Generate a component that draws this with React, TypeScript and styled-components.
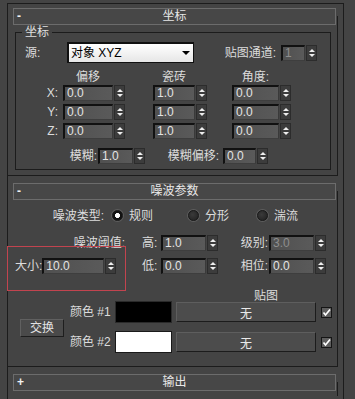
import React from 'react';
import styled, { createGlobalStyle } from 'styled-components';

const GlobalStyle = createGlobalStyle`
  html, body {
    margin: 0;
    padding: 0;
    background: #444444;
  }
  body {
    font-family: "Liberation Sans", "Noto Sans CJK SC", sans-serif;
    font-size: 12px;
    color: #dcdcdc;
  }
  * {
    box-sizing: border-box;
  }
`;

const Screen = styled.div`
  position: relative;
  width: 355px;
  height: 399px;
  overflow: hidden;
  background: #444444;
  padding-top: 3px;
`;

const Panel = styled.div`
  margin-left: 7px;
  width: 337px;
  height: 396px;
  border: 1px solid #1c1c1c;
  border-bottom: none;
  padding-top: 4px;
`;

const Rollout = styled.section<{ $mt?: number }>`
  margin-top: ${(p) => p.$mt ?? 0}px;
`;

const RolloutHeader = styled.div`
  position: relative;
  z-index: 1;
  margin: 0 7px 0 5px;
  height: 17px;
  border: 1px solid #6c6c6c;
  background: #474747;
  display: grid;
  grid-template-columns: 16px 1fr 16px;
  align-items: center;
  line-height: 15px;
  color: #e8e8e8;
`;

const Toggle = styled.span`
  padding-left: 3px;
  font-weight: bold;
  font-size: 12px;
  color: #f2f2f2;
`;

const HeaderTitle = styled.span`
  text-align: center;
`;

const RolloutBody = styled.div<{ $pb?: number; $open?: boolean }>`
  margin-top: -9px;
  margin-right: 5px;
  padding-top: 9px;
  padding-bottom: ${(p) => p.$pb ?? 0}px;
  border-right: 1px solid #1c1c1c;
  border-bottom: ${(p) => (p.$open === false ? 'none' : '1px solid #1c1c1c')};
  min-height: ${(p) => (p.$open === false ? '14px' : 'auto')};
`;

const Group = styled.div`
  position: relative;
  margin: 7px 6px 0 7px;
  border: 1px solid #1c1c1c;
  padding: 9px 0 5px;
`;

const Legend = styled.span`
  position: absolute;
  top: -8px;
  left: 6px;
  padding: 0 3px;
  background: #444444;
  line-height: 14px;
  color: #e0e0e0;
`;

const Row = styled.div<{ $mt?: number; $h?: number }>`
  display: flex;
  align-items: center;
  margin-top: ${(p) => p.$mt ?? 0}px;
  height: ${(p) => p.$h ?? 16}px;
`;

const Label = styled.span<{ $w: number; $pr?: number; $align?: string }>`
  width: ${(p) => p.$w}px;
  flex: none;
  padding-right: ${(p) => p.$pr ?? 0}px;
  text-align: ${(p) => p.$align ?? 'right'};
  white-space: nowrap;
  line-height: 14px;
`;

const Gap = styled.span<{ $w: number }>`
  width: ${(p) => p.$w}px;
  flex: none;
`;

const Dropdown = styled.div`
  width: 127px;
  height: 21px;
  flex: none;
  display: flex;
  align-items: center;
  justify-content: space-between;
  padding: 0 3px 0 2px;
  background: linear-gradient(#ffffff, #e6e6e6);
  border: 1px solid #101010;
  border-top-width: 2px;
  border-left-width: 2px;
  color: #000000;
  line-height: 15px;
`;

const DropArrow = styled.span`
  width: 0;
  height: 0;
  border-left: 4px solid transparent;
  border-right: 4px solid transparent;
  border-top: 4px solid #000000;
`;

const SpinBox = styled.div<{ $w: number }>`
  display: flex;
  flex: none;
  width: ${(p) => p.$w}px;
  height: 16px;
`;

const SpinField = styled.div<{ $disabled?: boolean }>`
  flex: 1;
  height: 16px;
  background: linear-gradient(90deg, #505050, #5a5a5a);
  border-top: 2px solid #111111;
  border-left: 2px solid #111111;
  border-right: 1px solid #3a3a3a;
  border-bottom: 1px solid #3e3e3e;
  padding-left: 2px;
  line-height: 13px;
  color: ${(p) => (p.$disabled ? '#8e8e8e' : '#e4e4e4')};
  overflow: hidden;
`;

const SpinArrows = styled.div`
  width: 11px;
  margin-left: 1px;
  height: 16px;
  background: #3c3c3c;
  border: 1px solid #2c2c2c;
  display: flex;
  flex-direction: column;
  align-items: center;
  justify-content: center;
  gap: 2px;
`;

const ArrowUp = styled.span`
  width: 0;
  height: 0;
  border-left: 3px solid transparent;
  border-right: 3px solid transparent;
  border-bottom: 3px solid #eeeeee;
`;

const ArrowDown = styled.span`
  width: 0;
  height: 0;
  border-left: 3px solid transparent;
  border-right: 3px solid transparent;
  border-top: 3px solid #eeeeee;
`;

const ColHead = styled.span<{ $w: number }>`
  width: ${(p) => p.$w}px;
  flex: none;
  padding-right: 12px;
  text-align: center;
  line-height: 14px;
  white-space: nowrap;
`;

const ParamGrid = styled.div`
  display: grid;
  grid-template-columns: 134px 19px 57px 51px 57px;
  grid-template-rows: 16px 16px;
  row-gap: 7px;
  align-items: center;
  margin-top: 12px;
`;

const Cell = styled.div<{ $align?: string; $pr?: number; $pl?: number }>`
  display: flex;
  align-items: center;
  justify-content: ${(p) => p.$align ?? 'flex-start'};
  padding-right: ${(p) => p.$pr ?? 0}px;
  padding-left: ${(p) => p.$pl ?? 0}px;
  line-height: 14px;
  white-space: nowrap;
`;

const RadioRow = styled.div`
  display: flex;
  align-items: center;
  height: 15px;
  margin-top: 8px;
`;

const RadioOption = styled.label<{ $w?: number }>`
  display: flex;
  align-items: center;
  gap: 6px;
  flex: none;
  width: ${(p) => (p.$w ? `${p.$w}px` : 'auto')};
  line-height: 14px;
`;

const RadioDot = styled.span<{ $on?: boolean }>`
  width: 11px;
  height: 11px;
  border-radius: 50%;
  flex: none;
  border: 1px solid #1a1a1a;
  background: ${(p) =>
    p.$on
      ? 'radial-gradient(circle, #ffffff 0 2.2px, #111111 2.8px 100%)'
      : 'radial-gradient(circle at 40% 40%, #3a3a3a, #202020)'};
  box-shadow: 0 0 0 1px #5c5c5c;
`;

const MapTitle = styled.div`
  margin-top: 16px;
  height: 12px;
  line-height: 12px;
  padding-left: 246px;
`;

const ColorGrid = styled.div`
  display: grid;
  grid-template-columns: 62px 45px 57px 4px 140px 5px 11px;
  grid-template-rows: 22px 22px;
  row-gap: 8px;
  align-items: center;
  margin-top: -1px;
`;

const SwapButton = styled.button`
  grid-column: 1;
  grid-row: 1 / span 2;
  margin: 2px 0 0 12px;
  width: 44px;
  height: 18px;
  padding: 0;
  font: inherit;
  line-height: 14px;
  color: #e2e2e2;
  background: #4a4a4a;
  border: 1px solid #1e1e1e;
  border-top-color: #606060;
  border-left-color: #606060;
`;

const ColorLabel = styled.span`
  grid-column: 2;
  text-align: right;
  padding-right: 5px;
  line-height: 14px;
  white-space: nowrap;
`;

const Swatch = styled.div<{ $color: string }>`
  grid-column: 3;
  height: 22px;
  background: ${(p) => p.$color};
  border: 1px solid ${(p) => (p.$color === '#000000' ? '#2a2a2a' : '#1a1a1a')};
`;

const MapButton = styled.button`
  grid-column: 5;
  height: 20px;
  padding: 0;
  font: inherit;
  color: #eaeaea;
  background: #4c4c4c;
  border: 1px solid #1c1c1c;
  border-top-color: #5e5e5e;
  border-left-color: #5e5e5e;
`;

const CheckBox = styled.span`
  grid-column: 7;
  width: 11px;
  height: 11px;
  background: #5e5e5e;
  border: 1px solid #151515;
  display: flex;
  align-items: center;
  justify-content: center;
`;

const Highlight = styled.div`
  position: absolute;
  left: 7px;
  top: 246px;
  width: 119px;
  height: 45px;
  border: 1px solid #c2444f;
  pointer-events: none;
`;

const Spinner = ({ w, value, disabled }: { w: number; value: string; disabled?: boolean }) => (
  <SpinBox $w={w}>
    <SpinField $disabled={disabled}>{value}</SpinField>
    <SpinArrows>
      <ArrowUp />
      <ArrowDown />
    </SpinArrows>
  </SpinBox>
);

const Check = () => (
  <CheckBox>
    <svg width="9" height="9" viewBox="0 0 9 9">
      <polyline points="1.5,4.5 3.5,7 8,1.5" fill="none" stroke="#ffffff" strokeWidth="1.7" />
    </svg>
  </CheckBox>
);

const axes = ['X:', 'Y:', 'Z:'];

const App = () => {
  return (
    <Screen>
      <GlobalStyle />
      <Panel>
        <Rollout>
          <RolloutHeader>
            <Toggle>-</Toggle>
            <HeaderTitle>坐标</HeaderTitle>
          </RolloutHeader>
          <RolloutBody $pb={5}>
            <Group>
              <Legend>坐标</Legend>
              <Row $h={21}>
                <Label $w={51} $align="left" style={{ paddingLeft: 9 }}>
                  源:
                </Label>
                <Dropdown>
                  <span>对象 XYZ</span>
                  <DropArrow />
                </Dropdown>
                <Label $w={87} $pr={5}>
                  贴图通道:
                </Label>
                <Spinner w={36} value="1" disabled />
              </Row>
              <Row $mt={7} $h={14}>
                <Gap $w={47} />
                <ColHead $w={62}>偏移</ColHead>
                <Gap $w={28} />
                <ColHead $w={54}>瓷砖</ColHead>
                <Gap $w={25} />
                <ColHead $w={59}>角度:</ColHead>
              </Row>
              {axes.map((a, i) => (
                <Row key={a} $mt={i === 0 ? 1 : 3}>
                  <Label $w={47} $pr={5}>
                    {a}
                  </Label>
                  <Spinner w={62} value="0.0" />
                  <Gap $w={28} />
                  <Spinner w={54} value="1.0" />
                  <Gap $w={25} />
                  <Spinner w={59} value="0.0" />
                </Row>
              ))}
              <Row $mt={9}>
                <Label $w={82} $pr={1}>
                  模糊:
                </Label>
                <Spinner w={47} value="1.0" />
                <Label $w={78} $pr={4}>
                  模糊偏移:
                </Label>
                <Spinner w={45} value="0.0" />
              </Row>
            </Group>
          </RolloutBody>
        </Rollout>

        <Rollout $mt={7}>
          <RolloutHeader>
            <Toggle>-</Toggle>
            <HeaderTitle>噪波参数</HeaderTitle>
          </RolloutHeader>
          <RolloutBody $pb={13}>
            <RadioRow>
              <Label $w={99} $pr={3}>
                噪波类型:
              </Label>
              <Gap $w={5} />
              <RadioOption $w={76}>
                <RadioDot $on />
                规则
              </RadioOption>
              <RadioOption $w={69}>
                <RadioDot />
                分形
              </RadioOption>
              <RadioOption>
                <RadioDot />
                湍流
              </RadioOption>
            </RadioRow>
            <ParamGrid>
              <Cell $align="flex-end" $pr={17}>
                噪波阈值:
              </Cell>
              <Cell>高:</Cell>
              <Spinner w={57} value="1.0" />
              <Cell $align="flex-end" $pr={1}>
                级别:
              </Cell>
              <Spinner w={57} value="3.0" disabled />

              <Cell $pl={7}>
                大小:
                <Spinner w={74} value="10.0" />
              </Cell>
              <Cell>低:</Cell>
              <Spinner w={57} value="0.0" />
              <Cell $align="flex-end" $pr={1}>
                相位:
              </Cell>
              <Spinner w={57} value="0.0" />
            </ParamGrid>
            <MapTitle>贴图</MapTitle>
            <ColorGrid>
              <SwapButton>交换</SwapButton>
              <ColorLabel style={{ gridRow: 1 }}>颜色 #1</ColorLabel>
              <Swatch $color="#000000" style={{ gridRow: 1 }} />
              <MapButton style={{ gridRow: 1 }}>无</MapButton>
              <div style={{ gridRow: 1, gridColumn: 7 }}>
                <Check />
              </div>
              <ColorLabel style={{ gridRow: 2 }}>颜色 #2</ColorLabel>
              <Swatch $color="#ffffff" style={{ gridRow: 2 }} />
              <MapButton style={{ gridRow: 2 }}>无</MapButton>
              <div style={{ gridRow: 2, gridColumn: 7 }}>
                <Check />
              </div>
            </ColorGrid>
          </RolloutBody>
        </Rollout>

        <Rollout $mt={7}>
          <RolloutHeader>
            <Toggle>+</Toggle>
            <HeaderTitle>输出</HeaderTitle>
          </RolloutHeader>
          <RolloutBody $open={false} />
        </Rollout>
      </Panel>
      <Highlight />
    </Screen>
  );
};

export default App;
